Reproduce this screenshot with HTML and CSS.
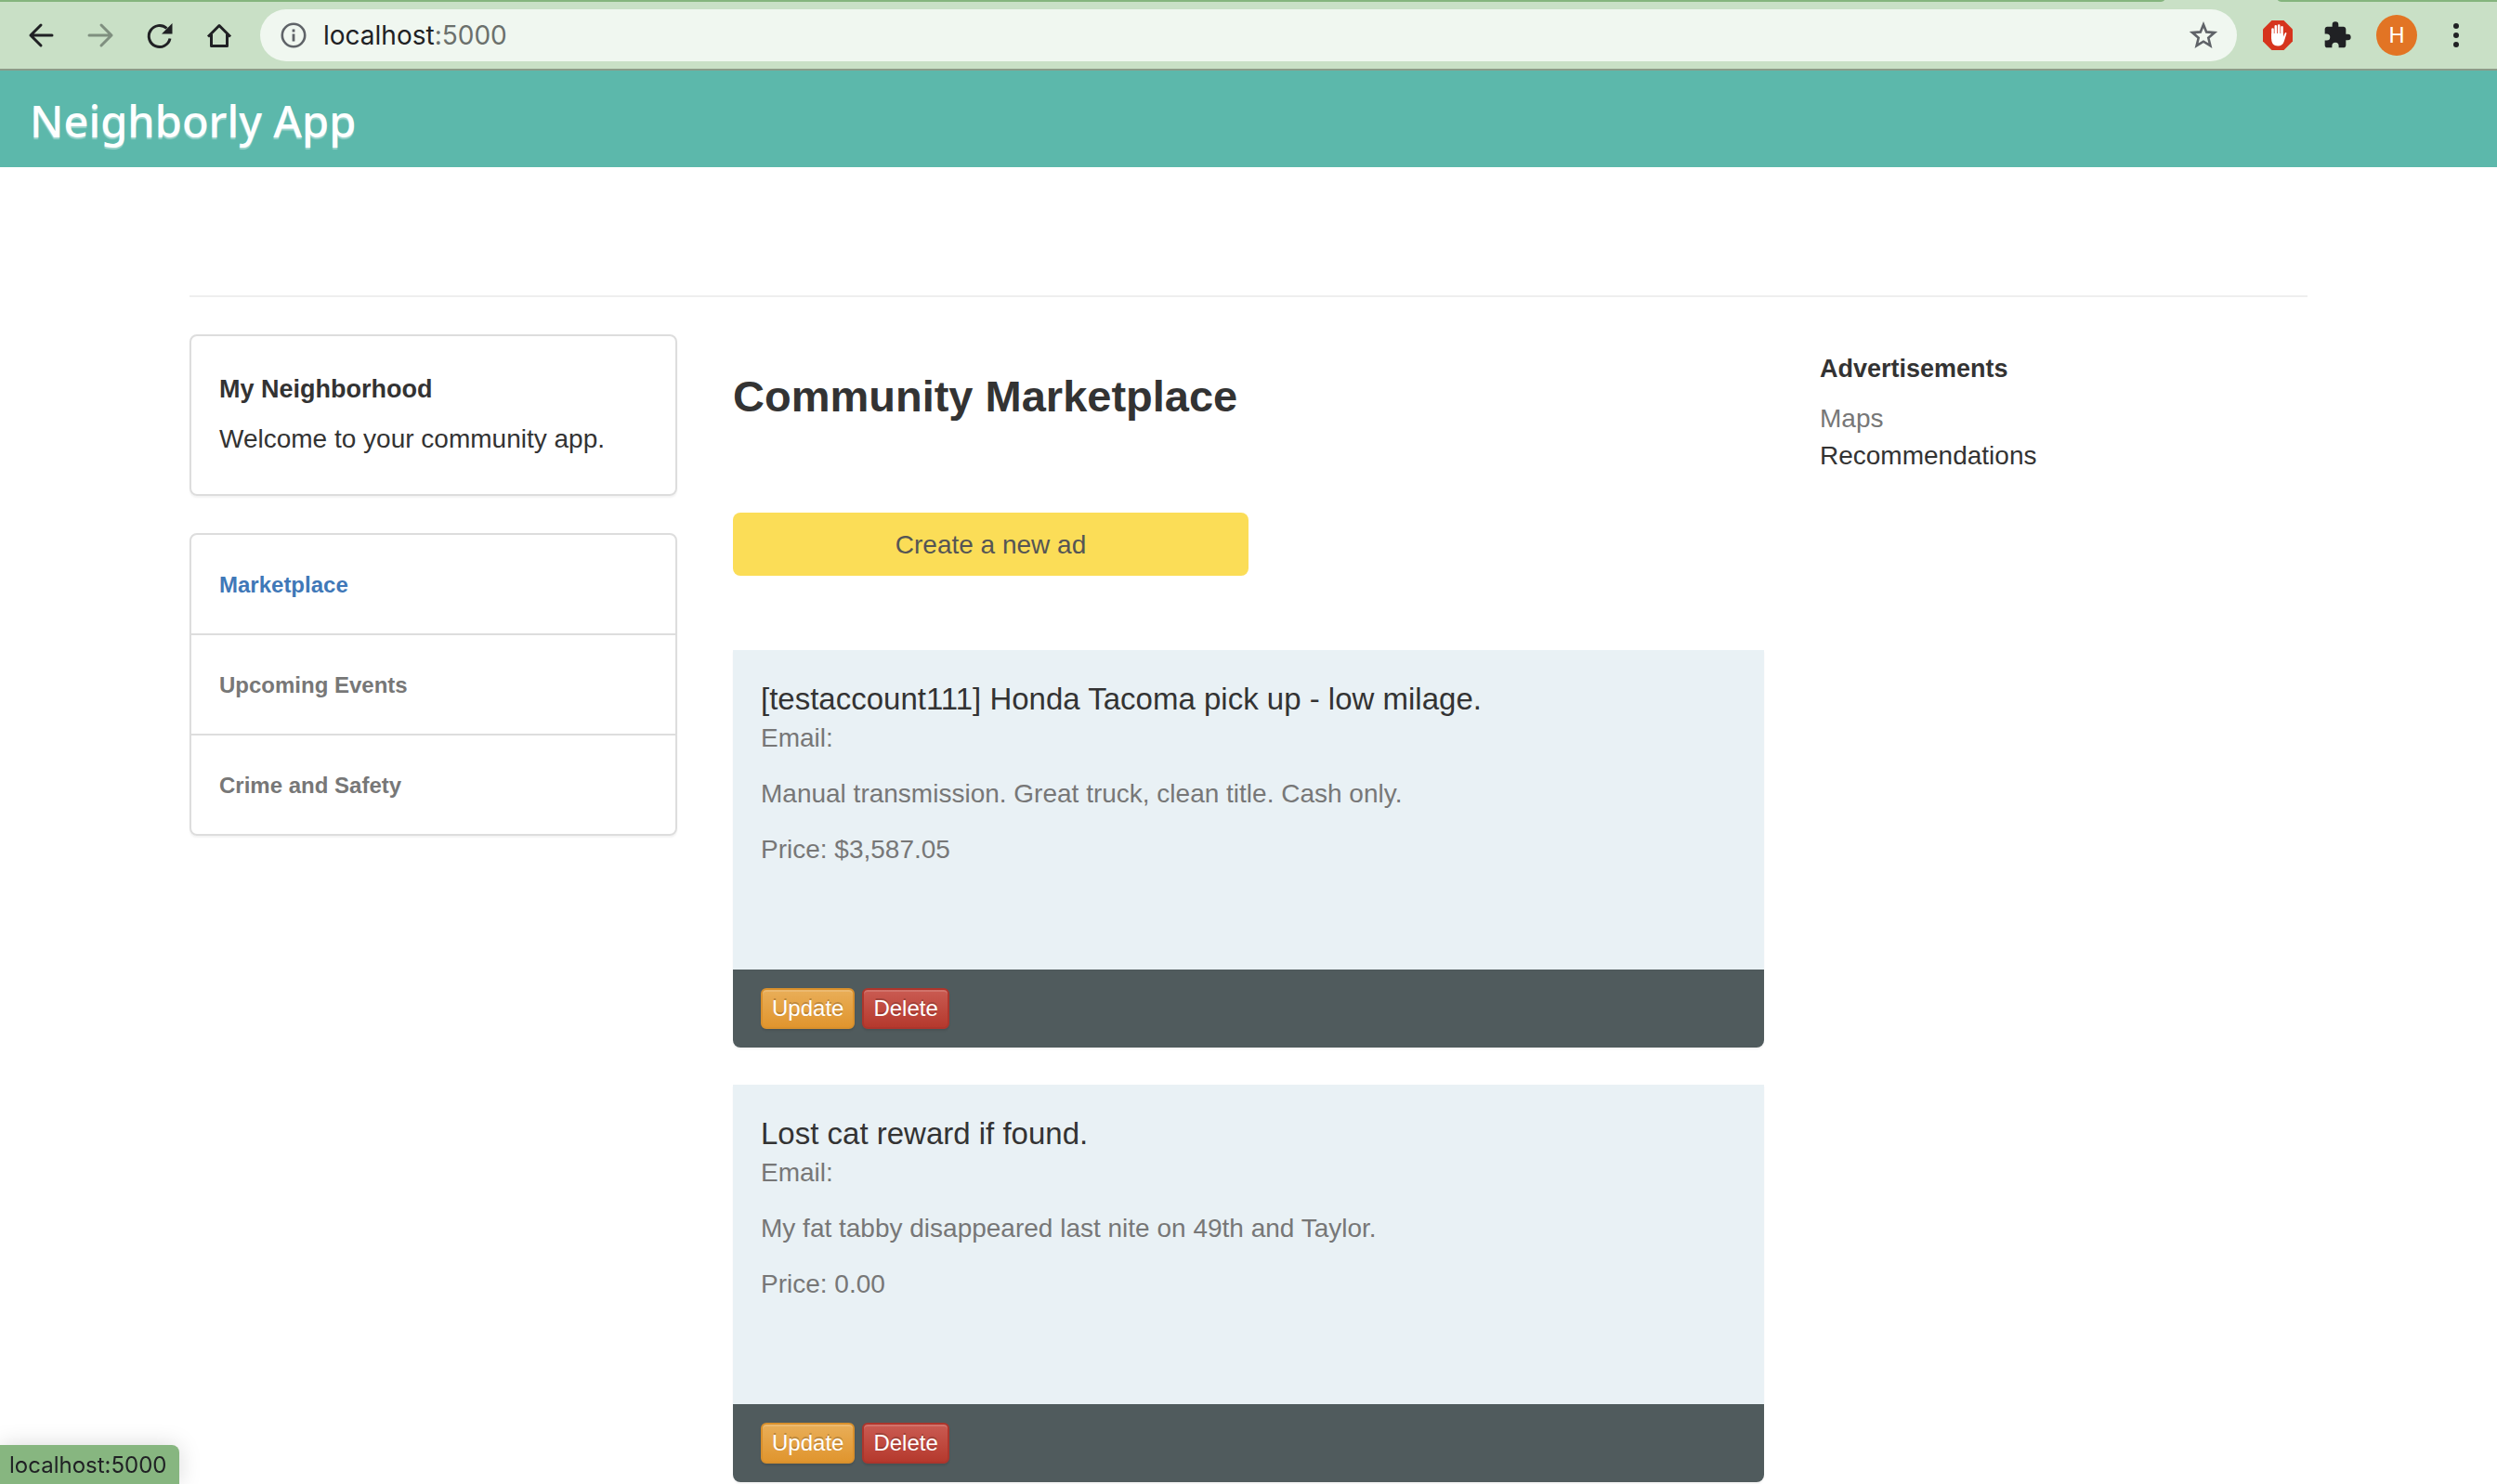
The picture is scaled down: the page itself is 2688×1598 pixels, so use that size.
FILE: index.html
```html
<!DOCTYPE html>
<html lang="en">
<head>
<meta charset="utf-8">
<title>Neighborly App</title>
<link rel="stylesheet" href="styles.css">
</head>
<body>
<div class="browser-bar">
  <div class="tab-edge"><span class="tab-left"></span><span class="tab-right"></span></div>
  <div class="toolbar">
    <button class="tool" aria-label="Back"><svg viewBox="0 0 32 32"><path d="M28 16H5M16 5 5 16l11 11" fill="none" stroke="#202124" stroke-width="3" stroke-linecap="round" stroke-linejoin="round"/></svg></button>
    <button class="tool" aria-label="Forward"><svg viewBox="0 0 32 32"><path d="M4 16h24M17 5l11 11-11 11" fill="none" stroke="#7f8f7f" stroke-width="3" stroke-linecap="round" stroke-linejoin="round"/></svg></button>
    <button class="tool" aria-label="Reload"><svg viewBox="0 0 32 32"><path d="M27 19.500A11.500 11.500 0 1 1 23.500 8.500" fill="none" stroke="#202124" stroke-width="3"/><path d="M29.500 3v11.500H18z" fill="#202124"/></svg></button>
    <button class="tool" aria-label="Home"><svg viewBox="0 0 32 32"><path d="M4 17.500 16 5.500l12 12M7.500 15v12.500h17V15" fill="none" stroke="#202124" stroke-width="3" stroke-linejoin="round"/></svg></button>
    <div class="omnibox">
      <svg class="info" viewBox="0 0 28 28"><circle cx="14" cy="14" r="12.200" fill="none" stroke="#5f6368" stroke-width="2.600"/><path d="M14 12.500V20.500M14 7.500v3" stroke="#5f6368" stroke-width="2.800"/></svg>
      <span class="address">localhost<span class="port">:5000</span></span>
      <svg class="star" viewBox="0 0 32 32"><path d="M16 4.500l3.200 7.900 8.800.7-6.700 5.700 2.100 8.400L16 22.700l-7.400 4.500 2.100-8.400L4 13.100l8.800-.7z" fill="none" stroke="#5f6368" stroke-width="2.600"/></svg>
    </div>
    <div class="extensions">
      <svg class="ext" viewBox="0 0 32 32"><path d="M9.500 0h13L32 9.500v13L22.500 32h-13L0 22.500v-13z" fill="#d6341d"/><path d="M10.500 19V9.500M13.800 17V6.300M17.200 17V5.500M20.500 18V7.300" stroke="#fff" stroke-width="2.600" stroke-linecap="round"/><path d="M9.200 14h12.600v4l1.700-4c.5-1.300 2-1.300 1.900.2l-2.600 8.300c-1 3.300-3.300 5-6.600 5-4.700 0-7-3-7-7.500z" fill="#fff"/></svg>
      <svg class="ext" viewBox="0 0 24 24"><path d="M20.500 11H19V7c0-1.100-.9-2-2-2h-4V3.500a2.500 2.500 0 0 0-5 0V5H4c-1.100 0-2 .9-2 2v3.800h1.500a2.700 2.700 0 0 1 0 5.400H2V20c0 1.100.9 2 2 2h3.800v-1.500a2.700 2.700 0 0 1 5.400 0V22H17c1.100 0 2-.9 2-2v-4h1.500a2.500 2.500 0 0 0 0-5z" fill="#202124"/></svg>
      <span class="avatar">H</span>
      <svg class="ext" viewBox="0 0 32 32"><circle cx="16" cy="6" r="3" fill="#202124"/><circle cx="16" cy="16" r="3" fill="#202124"/><circle cx="16" cy="26" r="3" fill="#202124"/></svg>
    </div>
  </div>
</div>
<header class="site-header"><h1 class="brand">Neighborly App</h1></header>
<main class="container">
  <hr class="rule">
  <div class="columns">
    <aside class="side">
      <section class="card welcome">
        <h2 class="small-title">My Neighborhood</h2>
        <p class="text">Welcome to your community app.</p>
      </section>
      <nav class="card menu">
        <a class="menu-link current" href="#">Marketplace</a>
        <a class="menu-link" href="#">Upcoming Events</a>
        <a class="menu-link" href="#">Crime and Safety</a>
      </nav>
    </aside>
    <section class="market">
      <h2 class="market-title">Community Marketplace</h2>
      <button class="create">Create a new ad</button>
      <article class="post">
        <div class="post-body">
          <h3 class="post-title">[testaccount111] Honda Tacoma pick up - low milage.</h3>
          <p class="post-text">Email:</p>
          <p class="post-text">Manual transmission. Great truck, clean title. Cash only.</p>
          <p class="post-text">Price: $3,587.05</p>
        </div>
        <div class="post-footer"><button class="btn update">Update</button><button class="btn delete">Delete</button></div>
      </article>
      <article class="post">
        <div class="post-body">
          <h3 class="post-title">Lost cat reward if found.</h3>
          <p class="post-text">Email:</p>
          <p class="post-text">My fat tabby disappeared last nite on 49th and Taylor.</p>
          <p class="post-text">Price: 0.00</p>
        </div>
        <div class="post-footer"><button class="btn update">Update</button><button class="btn delete">Delete</button></div>
      </article>
    </section>
    <aside class="ads">
      <h2 class="small-title">Advertisements</h2>
      <p class="text muted">Maps</p>
      <p class="text">Recommendations</p>
    </aside>
  </div>
</main>
<div class="status">localhost:5000</div>
</body>
</html>
```
FILE: styles.css
```css
* { box-sizing: border-box; }
body {
  margin: 0;
  background: #fff;
  color: #333;
  font: 28px/40px "Liberation Sans", Arial, sans-serif;
}
h1, h2, h3, p { margin: 0; }
button { font-family: inherit; margin: 0; cursor: pointer; }

/* Browser toolbar */
.browser-bar { background: #c9e0c6; border-bottom: 2px solid #8c9c89; }
.tab-edge { display: flex; justify-content: space-between; height: 2px; }
.tab-left, .tab-right { background: #85b57e; }
.tab-left { flex: 1; margin-right: 122px; border-bottom-right-radius: 6px 2px; }
.tab-right { width: 236px; border-bottom-left-radius: 6px 2px; }
.toolbar { display: flex; align-items: center; height: 72px; padding: 0 28px; }
.tool { width: 32px; height: 32px; margin-right: 32px; padding: 0; border: 0; background: none; }
.tool svg { display: block; width: 32px; height: 32px; }
.tool:nth-child(4) { margin-right: 28px; }
.omnibox {
  display: flex;
  flex: 1;
  align-items: center;
  height: 56px;
  padding: 0 20px 0 22px;
  border-radius: 28px;
  background: #f0f7f0;
}
.info { width: 28px; height: 28px; margin-right: 18px; }
.address { flex: 1; color: #202124; font-family: Inter, sans-serif; font-size: 28px; }
.port { color: #6b706c; }
.star { width: 32px; height: 32px; }
.extensions { display: flex; align-items: center; gap: 32px; margin-left: 28px; }
.ext { width: 32px; height: 32px; }
.avatar {
  width: 44px;
  margin: 0 -6px;
  border-radius: 50%;
  background: #e27424;
  color: #fff;
  font: 24px/44px Roboto, sans-serif;
  text-align: center;
}

/* Site header */
.site-header { padding: 24px 32px 20px; background: #5cb8ab; }
.brand {
  color: #fff;
  font: 500 47px/60px "Noto Sans", sans-serif;
  text-shadow: 0 2px 1px rgba(255, 255, 255, .4);
}

/* Page grid */
.container { max-width: 2340px; margin: 0 auto; padding: 138px 30px 0; }
.rule { height: 2px; margin: 0 0 40px; border: 0; background: #eee; }
.columns { display: grid; grid-template-columns: 1fr 2fr 1fr; margin: 0 -30px; }
.side, .market, .ads { padding: 0 30px; }

.small-title { font-size: 27px; line-height: 32px; margin-bottom: 18px; }
.muted { color: #777; }

.card {
  margin-bottom: 40px;
  border: 2px solid #ddd;
  border-radius: 8px;
  box-shadow: 0 2px 2px rgba(0, 0, 0, .05);
}
.welcome { padding: 41px 30px 39px; }
.menu-link {
  display: block;
  padding: 34px 30px 32px;
  color: #777;
  font-size: 24px;
  font-weight: bold;
  text-decoration: none;
}
.menu-link + .menu-link { border-top: 2px solid #ddd; }
.menu-link.current { color: #3f78b8; }

.market-title { padding-top: 41px; font-size: 47px; line-height: 52px; }
.create {
  display: block;
  width: 50%;
  margin: 99px 0 80px;
  padding: 15px 14px 13px;
  border: 0;
  border-radius: 8px;
  background: #fbdd57;
  color: #555;
  font-size: 28px;
  line-height: 40px;
}
.post { margin-bottom: 40px; border-radius: 0 0 8px 8px; box-shadow: 0 2px 2px rgba(0, 0, 0, .05); }
.post-body { min-height: 344px; padding: 33px 30px; background: #e9f1f5; }
.post-title { margin-bottom: 2px; font-size: 33px; font-weight: normal; line-height: 40px; }
.post-text { margin-bottom: 20px; color: #777; }
.post-footer {
  display: flex;
  gap: 8px;
  padding: 20px 30px;
  border-radius: 0 0 8px 8px;
  background: #505b5d;
}
.btn {
  padding: 0 10px;
  border: 2px solid;
  border-radius: 6px;
  color: #fff;
  font-size: 24px;
  line-height: 40px;
  text-shadow: 0 -2px 0 rgba(0, 0, 0, .2);
  box-shadow: inset 0 2px 0 rgba(255, 255, 255, .15), 0 2px 2px rgba(0, 0, 0, .1);
}
.update { border-color: #d9902c; background: linear-gradient(#e9ae58, #e0952e); }
.delete { border-color: #ac352c; background: linear-gradient(#ca5b52, #b5392d); }

.ads { padding-top: 21px; }

/* Link preview over the page corner */
.status {
  position: fixed;
  bottom: 0;
  left: 0;
  padding: 2px 14px 0 10px;
  border-radius: 0 8px 0 0;
  background: #87b680;
  box-shadow: 0 0 24px rgba(0, 0, 0, .15);
  color: #202124;
  font: 24px/40px Inter, sans-serif;
}
```
